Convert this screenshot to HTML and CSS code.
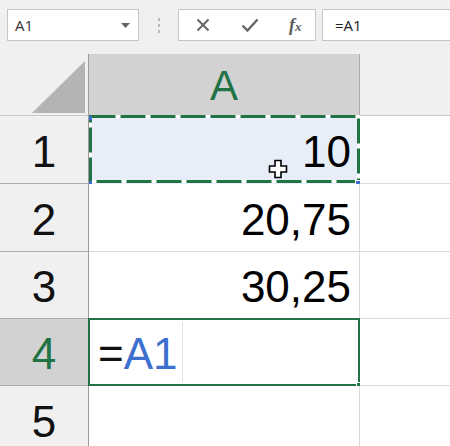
FILE: index.html
```html
<!DOCTYPE html>
<html>
<head>
<meta charset="utf-8">
<link rel="stylesheet" href="styles.css">
</head>
<body>
<div class="app">
  <div class="toolbar">
    <div class="namebox">
      <span class="nb-text">A1</span>
      <svg class="dd" width="9" height="5" viewBox="0 0 9 5"><path d="M0 0H9L4.5 5Z" fill="#666"/></svg>
    </div>
    <div class="grip"><i></i><i></i><i></i></div>
    <div class="btns">
      <svg class="ico" width="14" height="14" viewBox="0 0 14 14"><path d="M1.5 1.5L12.5 12.5M12.5 1.5L1.5 12.5" stroke="#666" stroke-width="2" fill="none"/></svg>
      <svg class="ico" width="18" height="14" viewBox="0 0 18 14"><path d="M1.5 7.5L6.5 12.5L16.5 1.5" stroke="#666" stroke-width="2.4" fill="none"/></svg>
      <span class="fx">f<small>x</small></span>
    </div>
    <div class="formula">=A1</div>
  </div>
  <div class="sheet">
    <div class="corner">
      <svg width="88" height="61" viewBox="0 0 88 61"><path d="M32 59H85V7Z" fill="#b4b4b4"/></svg>
    </div>
    <div class="colhead sel">A</div>
    <div class="colhead rest"></div>

    <div class="rowhead">1</div>
    <div class="cell a1">
      10
      <svg class="ants" width="271" height="68" viewBox="0 0 271 68"><rect x="1.5" y="1.5" width="268" height="65" fill="none" stroke="#fff" stroke-width="3"/><rect x="1.5" y="1.5" width="268" height="65" fill="none" stroke="#217346" stroke-width="3" stroke-dasharray="25 5"/></svg>
      <span class="mk tl"></span><span class="mk bl"></span><span class="mk br"></span>
      <svg class="cursor" width="20" height="20" viewBox="0 0 20 20"><path d="M7 1.5H13V7H18.5V13H13V18.5H7V13H1.5V7H7Z" fill="#fff" stroke="#000" stroke-width="1.6"/></svg>
    </div>
    <div class="cell rest"></div>

    <div class="rowhead">2</div>
    <div class="cell num">20,75</div>
    <div class="cell rest"></div>

    <div class="rowhead">3</div>
    <div class="cell num">30,25</div>
    <div class="cell rest"></div>

    <div class="rowhead sel">4</div>
    <div class="cell a4"><span class="eq">=</span><span class="ref">A1</span><span class="caret"></span><span class="fh"></span></div>
    <div class="cell rest"></div>

    <div class="rowhead">5</div>
    <div class="cell"></div>
    <div class="cell rest"></div>
  </div>
</div>
</body>
</html>
```
FILE: styles.css
```css
html, body {
  margin: 0;
  padding: 0;
  background: #f0f0f0;
  overflow: hidden;
}
.app {
  width: 450px;
  height: 446px;
  overflow: hidden;
}
.toolbar {
  height: 54px;
  box-sizing: border-box;
  padding-top: 9px;
  display: flex;
  align-items: flex-start;
  font-family: "Open Sans", "Noto Sans", sans-serif;
  font-size: 15px;
  color: #222;
}
.namebox {
  margin-left: 7px;
  width: 132px;
  height: 32px;
  box-sizing: border-box;
  border: 1px solid #c6c6c6;
  background: #fff;
  display: flex;
  align-items: center;
  justify-content: space-between;
  padding: 0 8px 0 7px;
}
.nb-text { color: #333; }
.grip {
  width: 39px;
  height: 32px;
  display: flex;
  flex-direction: column;
  align-items: center;
  justify-content: center;
  gap: 3px;
}
.grip i {
  width: 2px;
  height: 3px;
  background: #b8b8b8;
  display: block;
}
.btns {
  width: 138px;
  height: 32px;
  box-sizing: border-box;
  border: 1px solid #c6c6c6;
  background: #fff;
  display: flex;
  align-items: center;
  padding-left: 17px;
}
.btns .ico:first-child { margin-right: 31px; }
.btns .ico:nth-child(2) { margin-right: 30px; }
.fx {
  font-family: "Liberation Serif", serif;
  font-style: italic;
  font-weight: bold;
  font-size: 18px;
  color: #5a5a5a;
  line-height: 1;
}
.fx small { font-size: 13px; }
.formula {
  margin-left: 6px;
  flex: 1;
  height: 32px;
  box-sizing: border-box;
  border: 1px solid #c6c6c6;
  border-right: none;
  background: #fff;
  display: flex;
  align-items: center;
  padding-left: 12px;
  color: #222;
}
.sheet {
  display: grid;
  grid-template-columns: 89px 271px 1fr;
  grid-template-rows: 62px 68px 68px 67px 67px 68px;
  font-family: "Liberation Sans", Arial, sans-serif;
}
.corner {
  background: #f0f0f0;
  border-right: 1px solid #9b9b9b;
  border-bottom: 1px solid #c8c8c8;
  box-sizing: border-box;
}
.corner svg { display: block; }
.colhead {
  box-sizing: border-box;
  border-bottom: 1px solid #c8c8c8;
  border-right: 1px solid #ababab;
  background: #f0f0f0;
  display: flex;
  align-items: center;
  justify-content: center;
  font-size: 42px;
  padding-top: 2px;
}
.colhead.sel {
  background: #d2d2d2;
  color: #217346;
  border-bottom: 1px solid #d2d2d2;
}
.colhead.rest { border-right: none; }
.rowhead {
  box-sizing: border-box;
  background: #f0f0f0;
  border-right: 1px solid #9b9b9b;
  border-bottom: 1px solid #ababab;
  display: flex;
  align-items: center;
  justify-content: center;
  font-size: 44px;
  color: #111;
  padding-top: 4px;
}
.rowhead.sel {
  background: #d2d2d2;
  color: #217346;
}
.cell {
  box-sizing: border-box;
  background: #fff;
  border-right: 1px solid #dadada;
  border-bottom: 1px solid #dadada;
  position: relative;
  display: flex;
  align-items: center;
  font-size: 44px;
  color: #000;
  padding-top: 4px;
}
.cell.rest { border-right: none; }
.cell.num {
  justify-content: flex-end;
  padding-right: 8px;
}
.cell.a1 {
  background: #e8eef8;
  justify-content: flex-end;
  padding-right: 9px;
  border: none;
}
.ants {
  position: absolute;
  left: 0;
  top: -1px;
}
.mk {
  position: absolute;
  background: #3c6fcf;
}
.mk.tl { left: 0; top: 0; width: 3px; height: 4px; }
.mk.bl { left: 0; bottom: -1px; width: 3px; height: 4px; }
.mk.br { right: -3px; bottom: -4px; width: 6px; height: 6px; border: 1px solid #fff; }
.cursor {
  position: absolute;
  left: 179px;
  top: 43px;
}
.cell.a4 {
  border: 2px solid #217346;
  margin: -1px 0 0 -1px;
  padding-left: 8px;
  padding-top: 3px;
}
.eq { color: #111; }
.ref { color: #3d6fcf; }
.caret {
  width: 1px;
  height: 60px;
  background: #e0e0e0;
  margin-left: 4px;
  margin-top: -3px;
}
.fh {
  position: absolute;
  right: -4px;
  bottom: -4px;
  width: 5px;
  height: 5px;
  background: #217346;
  border: 1px solid #fff;
  border-right: none;
  border-bottom: none;
}
```
